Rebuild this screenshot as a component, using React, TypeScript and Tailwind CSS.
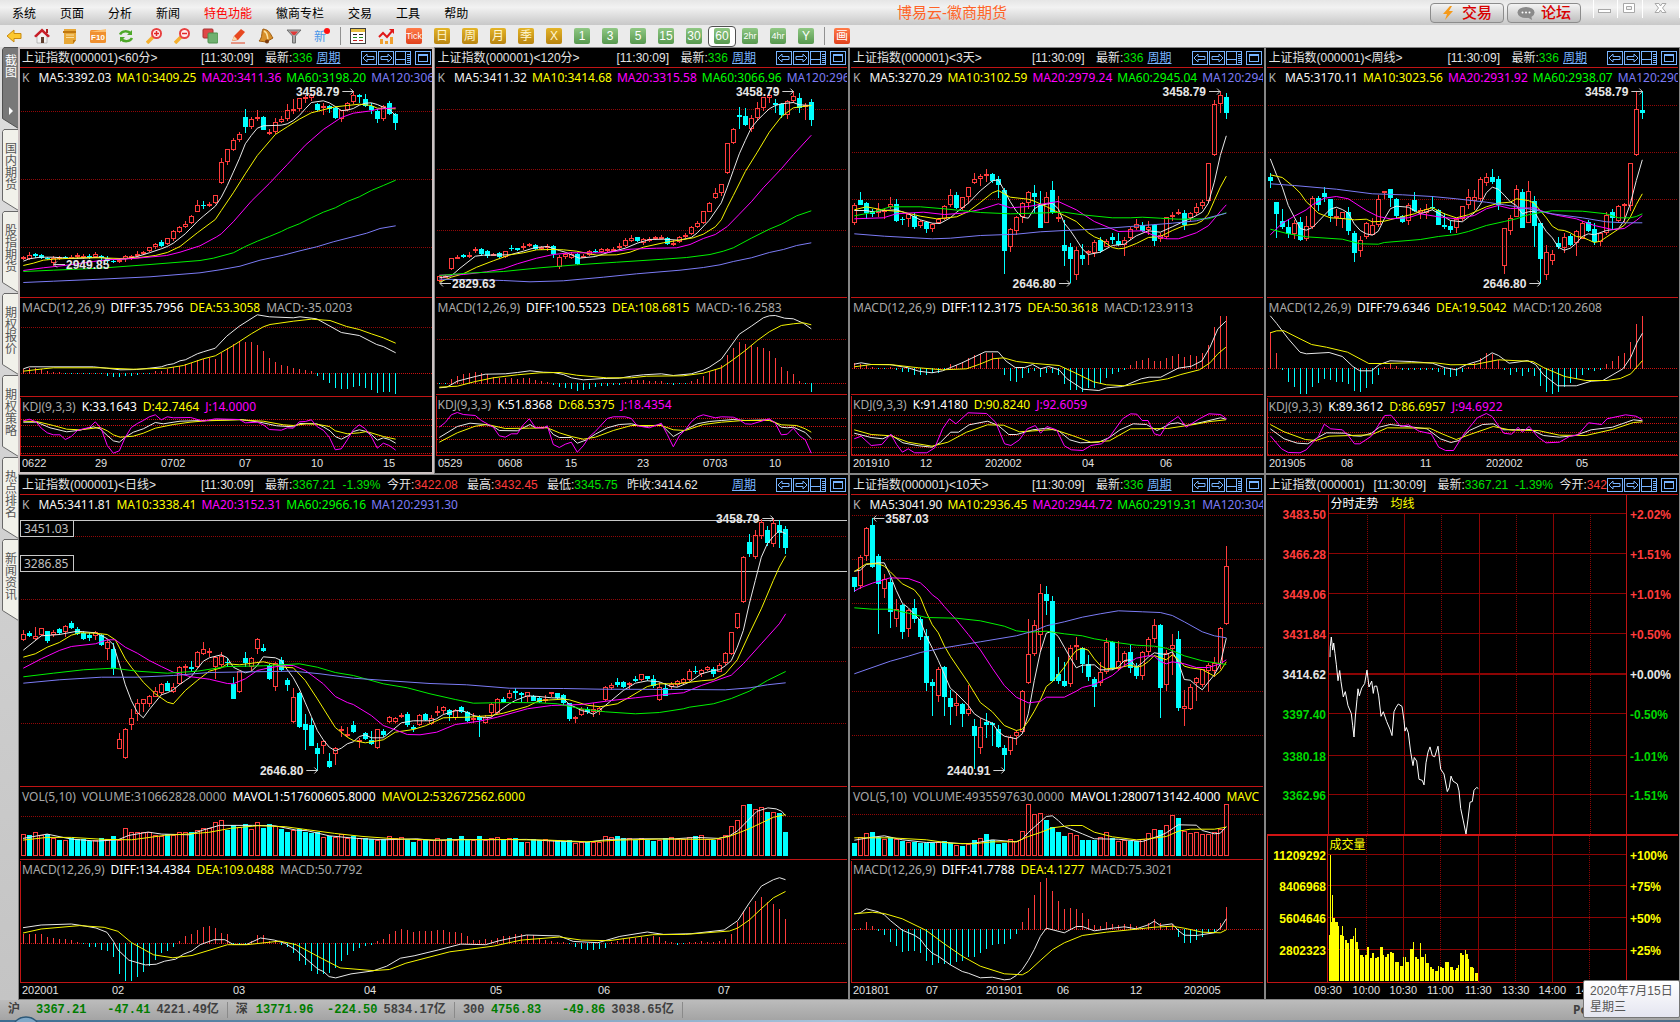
import type { ReactNode } from 'react'

const WHITE = '#e8e8e8'
const YELLOW = '#f5f500'
const MAGENTA = '#ff00ff'
const GREEN = '#00f000'
const BLUE = '#7b7bf5'
const UP = '#ff3c3c'
const DOWN = '#00ffff'
const LINE_COLORS = [WHITE, YELLOW, MAGENTA, GREEN, BLUE]

// Raw units -> pixels inside a pane
type Frame = { x: number; y: number; kx: number; ky: number }
type Series = { color: string; text: string }
type Marker = { text: string; x: number; y: number; dir: 'left' | 'right' }
type PaneData = {
  height: number
  labels: Series[]
  frame: Frame
  grid?: number[]
  lines?: string[]
  candles?: string
  bars?: number[]
  zero?: number
  volumes?: number[]
  base?: number
  markers?: Marker[]
  levels?: { y: number; boxTop: number; text: string }[]
  edge?: boolean
  brightGrid?: boolean
}
type ChartData = {
  period: string
  panes: PaneData[]
  axis: [number, string][]
  axisHeight: number
  active?: boolean
  wide?: boolean
}

const toY = (f: Frame, v: number) => Math.round((v - f.y) / f.ky)

const toPoints = (f: Frame, raw: string) =>
  raw
    .split(' ')
    .map((pair) => {
      const [x, y] = pair.split(',').map(Number)
      return `${((x - f.x) / f.kx).toFixed(1)},${((y - f.y) / f.ky + 0.5).toFixed(1)}`
    })
    .join(' ')

// "u 300 310 330 340": direction, high, body top, body bottom, low
const parseCandles = (raw: string) =>
  raw.split(',').map((item) => {
    const [dir, ...rest] = item.trim().split(' ')
    const [high, top, bottom, low] = rest.map(Number)
    return { up: dir === 'u', high, top, bottom, low }
  })

function Candles({ raw, frame }: { raw: string; frame: Frame }) {
  return (
    <g shapeRendering="crispEdges">
      {parseCandles(raw).map((c, i) => {
        const x = 6 * i
        const high = toY(frame, c.high)
        const top = toY(frame, c.top)
        const bottom = Math.max(toY(frame, c.bottom), top + 1)
        const low = Math.max(toY(frame, c.low), bottom)
        if (c.up) {
          return (
            <g key={i} stroke={UP} fill="none">
              <path d={`M${x + 3.5} ${high}V${top}M${x + 3.5} ${bottom}V${low}`} />
              <rect x={x + 1.5} y={top + 0.5} width={4} height={Math.max(bottom - top - 1, 1)} />
            </g>
          )
        }
        return (
          <g key={i} fill={DOWN}>
            <rect x={x + 3} y={high} width={1} height={Math.max(low - high, 1)} />
            <rect x={x + 1} y={top} width={5} height={bottom - top} />
          </g>
        )
      })}
    </g>
  )
}

function MarkerLabel({ marker, frame }: { marker: Marker; frame: Frame }) {
  const x = (marker.x - frame.x) / frame.kx
  const y = toY(frame, marker.y)
  const right = marker.dir === 'right'
  return (
    <g>
      <text
        x={right ? x - 14 : x + 12}
        y={y + 5}
        textAnchor={right ? 'end' : 'start'}
        fill="#e6e6e6"
        className="text-xs font-bold"
      >
        {marker.text}
      </text>
      <path
        d={right ? `M${x - 11} ${y + 0.5}h11m-3 -3l3 3l-3 3` : `M${x + 11} ${y + 0.5}h-11m3 -3l-3 3l3 3`}
        stroke="#d0d0d0"
        fill="none"
      />
    </g>
  )
}

function Pane({ pane, candleSource }: { pane: PaneData; candleSource: string }) {
  const f = pane.frame
  const directions = parseCandles(candleSource).map((c) => c.up)
  return (
    <section className="grid overflow-hidden border-t border-[#c01414]">
      <svg className="col-start-1 row-start-1 w-full" style={{ height: pane.height }}>
        <g shapeRendering="crispEdges">
          {pane.grid?.map((v) => (
            <line
              key={v}
              x1="1"
              x2="100%"
              y1={toY(f, v) + 0.5}
              y2={toY(f, v) + 0.5}
              stroke={pane.brightGrid ? '#d01010' : '#900808'}
              strokeDasharray="1 1"
            />
          ))}
          {pane.edge && <line x1="0.5" x2="0.5" y1="1" y2="100%" stroke="#c01414" />}
          {pane.zero !== undefined && (
            <line x1="1" x2="100%" y1={toY(f, pane.zero) + 0.5} y2={toY(f, pane.zero) + 0.5} stroke="#c81010" strokeDasharray="1 1" />
          )}
          {pane.volumes?.map((v, i) => {
            const top = toY(f, v)
            const height = toY(f, pane.base ?? 0) - top
            return directions[i] ? (
              <rect key={i} x={6 * i + 1.5} y={top + 0.5} width={4} height={height - 1} stroke={UP} fill="none" />
            ) : (
              <rect key={i} x={6 * i + 1} y={top} width={5} height={height} fill={DOWN} />
            )
          })}
          {pane.bars?.map((v, i) => {
            const zero = toY(f, pane.zero ?? 0)
            const y = toY(f, v)
            return (
              <rect
                key={i}
                x={6 * i + 3}
                y={Math.min(y, zero)}
                width={1}
                height={Math.abs(y - zero) + 1}
                fill={y < zero ? UP : DOWN}
              />
            )
          })}
        </g>
        {pane.levels?.map((l) => (
          <g key={l.text}>
            <line x1="0" x2="100%" y1={toY(f, l.y) + 0.5} y2={toY(f, l.y) + 0.5} stroke="#c8c8c8" />
            <rect x="0.5" y={toY(f, l.boxTop) + 0.5} width="53" height="16" fill="#000" stroke="#c8c8c8" />
            <text x="4" y={toY(f, l.boxTop) + 13} fill="#c0c0c0" className="font-['Noto_Sans'] text-xs">
              {l.text}
            </text>
          </g>
        ))}
        {pane.candles && <Candles raw={pane.candles} frame={f} />}
        {pane.lines?.map((raw, i) => (
          <polyline key={i} points={toPoints(f, raw)} fill="none" stroke={LINE_COLORS[i]} />
        ))}
        {pane.markers?.map((m) => <MarkerLabel key={m.text} marker={m} frame={f} />)}
      </svg>
      <p
        className={`z-10 col-start-1 row-start-1 flex h-5 overflow-hidden pl-0.5 font-['Noto_Sans'] text-xs leading-5 whitespace-nowrap ${pane.candles ? 'gap-[5px]' : 'gap-1.5'}`}
      >
        {pane.labels.map((l) => (
          <span key={l.text} style={{ color: l.color }} className={l.text === 'K' ? 'mr-1' : ''}>
            {l.text}
          </span>
        ))}
      </p>
    </section>
  )
}

function HeaderButton({ label, children, className = '' }: { label: string; children: ReactNode; className?: string }) {
  return (
    <button aria-label={label} className={`h-3.5 w-4 border border-[#78b4ff] bg-black ${className}`}>
      <svg width="14" height="12" viewBox="0 0 14 12" fill="none" stroke="#78b4ff" shapeRendering="crispEdges">
        {children}
      </svg>
    </button>
  )
}

function HeaderButtons() {
  return (
    <div className="mr-px flex shrink-0 gap-px">
      <HeaderButton label="上一个">
        <path d="M1 6l4-4v2.500h7v3h-7v2.500z" shapeRendering="auto" />
      </HeaderButton>
      <HeaderButton label="下一个">
        <path d="M13 6l-4-4v2.500h-7v3h7v2.500z" shapeRendering="auto" />
      </HeaderButton>
      <HeaderButton label="分栏">
        <path d="M0 7.500h10M9.500 0v12" />
        <path d="M11 2.500h3M11 4.500h3M11 6.500h3M11 8.500h3M11 10.500h3" />
      </HeaderButton>
      <HeaderButton label="最大化" className="ml-[3px]">
        <path d="M2.500 2.500h9v7h-9zM2 3.500h10" />
      </HeaderButton>
    </div>
  )
}

function Stat({ name, value, color, className = 'w-20' }: { name: string; value: string; color: string; className?: string }) {
  return (
    <span className={`shrink-0 ${className}`}>
      {name}:<span style={{ color }}>{value}</span>
    </span>
  )
}

const FALL = '#00e000'

function PanelHeader({ period, size }: { period?: string; size: 'narrow' | 'wide' | 'tick' }) {
  return (
    <header className="flex h-[18px] items-center overflow-hidden pl-0.5 text-xs leading-[18px] whitespace-nowrap text-[#e4e4e4]">
      <div className="flex min-w-0 flex-1 overflow-hidden">
        <h2 className={size === 'tick' ? 'w-[105px] shrink-0' : 'w-[179px] shrink-0'}>
          上证指数(000001){period && `<${period}>`}
        </h2>
        <time className="w-16 shrink-0">[11:30:09]</time>
        {size === 'narrow' && <Stat name="最新" value="336" color={FALL} className="" />}
        {size !== 'narrow' && <Stat name="最新" value={'3367.21\u00a0 -1.39%'} color={FALL} className="w-[122px]" />}
        {size === 'tick' && <Stat name="今开" value="342" color={UP} className="" />}
        {size === 'wide' && (
          <>
            <Stat name="今开" value="3422.08" color={UP} />
            <Stat name="最高" value="3432.45" color={UP} />
            <Stat name="最低" value="3345.75" color={FALL} />
            <Stat name="昨收" value="3414.62" color="#e4e4e4" />
          </>
        )}
      </div>
      {period && (
        <a href="#period" className="mr-5 ml-0.5 text-[#78b4ff] underline">
          周期
        </a>
      )}
      <HeaderButtons />
    </header>
  )
}

const frameClass = (active?: boolean) =>
  active ? 'border-2 border-[#cdc3c3] bg-black' : 'border border-[#858585] bg-black p-px'

function ChartPanel({ chart }: { chart: ChartData }) {
  const candles = chart.panes[0].candles ?? ''
  return (
    <article className={`min-w-0 overflow-hidden ${chart.wide ? 'col-span-2' : ''} ${frameClass(chart.active)}`}>
      <PanelHeader period={chart.period} size={chart.wide ? 'wide' : 'narrow'} />
      {chart.panes.map((p, i) => (
        <Pane key={i} pane={p} candleSource={candles} />
      ))}
      <svg className="block w-full border-t border-[#c01414] text-[11px]" style={{ height: chart.axisHeight }}>
        {chart.axis.map(([x, text]) => (
          <text key={x} x={x} y="11" fill="#e0e0e0">
            {text}
          </text>
        ))}
      </svg>
    </article>
  )
}

const maLabels = (v: string[]): Series[] => [
  { color: '#b0b0b0', text: 'K' },
  { color: '#f4f4f4', text: `MA5:${v[0]}` },
  { color: '#ffff00', text: `MA10:${v[1]}` },
  { color: MAGENTA, text: `MA20:${v[2]}` },
  { color: '#00ff00', text: `MA60:${v[3]}` },
  { color: BLUE, text: `MA120:${v[4]}` },
]
const macdLabels = (diff: string, dea: string, macd: string): Series[] => [
  { color: '#a8a8a8', text: 'MACD(12,26,9)' },
  { color: '#ffffff', text: `DIFF:${diff}` },
  { color: '#ffff00', text: `DEA:${dea}` },
  { color: '#a8a8a8', text: `MACD:${macd}` },
]
const kdjLabels = (k: string, d: string, j: string): Series[] => [
  { color: '#a8a8a8', text: 'KDJ(9,3,3)' },
  { color: '#ffffff', text: `K:${k}` },
  { color: '#ffff00', text: `D:${d}` },
  { color: MAGENTA, text: `J:${j}` },
]
const volLabels = (v: string, m1: string, last: string): Series[] => [
  { color: '#a8a8a8', text: 'VOL(5,10)' },
  { color: '#a8a8a8', text: `VOLUME:${v}` },
  { color: '#ffffff', text: `MAVOL1:${m1}` },
  { color: '#ffff00', text: last },
]

const min60: ChartData = {
  period: '60分',
  active: true,
  axisHeight: 17,
  axis: [[2, '0622'], [75, '29'], [141, '0702'], [219, '07'], [291, '10'], [363, '15']],
  panes: [
    {
      height: 229,
      labels: maLabels(['3392.03', '3409.25', '3411.36', '3198.20', '306']),
      frame: { x: 60, y: 204, kx: 3, ky: 3 },
      grid: [334, 538, 742],
      candles:
        'u 768 771 778 780,u 757 764 776 780,d 760 763 769 773,d 763 765 774 778,d 771 774 776 779,u 768 775 790 798,u 768 770 776 780,d 768 771 774 778,u 766 772 774 776,u 760 765 772 776,u 762 767 773 776,d 762 768 774 777,u 756 762 770 774,d 764 767 775 780,d 768 775 784 790,d 778 782 786 788,u 778 781 786 790,u 765 767 778 786,u 764 767 774 780,u 752 762 766 770,u 754 756 762 766,u 740 742 752 756,u 730 731 742 747,d 719 726 737 741,u 714 715 733 736,u 690 694 718 722,u 678 680 696 700,u 664 671 680 684,u 645 649 668 671,u 600 616 635 637,d 604 615 618 628,u 605 611 616 622,u 585 586 608 612,u 473 487 550 552,u 446 448 487 494,u 414 421 449 452,u 396 403 421 425,d 327 351 380 398,u 350 357 380 388,u 330 351 356 362,d 347 351 389 390,u 388 397 400 406,u 355 365 397 402,u 348 358 365 370,u 312 331 358 362,u 298 326 331 342,u 293 295 326 334,u 285 292 294 308,u 278 284 294 302,d 308 311 330 333,u 310 318 321 345,d 314 319 328 340,d 320 325 354 358,u 330 331 357 365,u 307 308 330 333,u 274 286 307 312,d 282 286 290 310,d 282 297 318 320,d 310 318 331 343,d 326 332 357 368,u 316 319 356 362,d 302 310 342 345,d 338 341 368 390',
      lines: [
        '70,782 88,775 120,770 160,770 214,774 250,773 300,770 340,777 380,775 412,768 448,757 484,745 502,738 520,728 556,700 592,663 610,647 646,617 664,590 682,555 700,515 718,475 736,430 754,405 772,383 790,376 844,374 862,370 880,360 898,345 916,325 934,306 970,301 988,307 1006,318 1024,330 1042,329 1060,324 1078,314 1096,308 1114,307 1132,312 1150,320 1168,327 1187,345',
        '70,795 100,788 130,779 160,776 240,772 300,772 360,774 412,772 466,765 502,756 540,738 592,697 646,657 664,630 700,577 736,520 772,465 826,402 862,379 898,356 934,337 970,328 1006,319 1042,315 1078,311 1114,315 1132,323 1187,325',
        '70,810 130,802 200,794 280,783 320,778 400,774 500,765 540,755 600,736 650,709 664,700 700,664 754,602 808,549 862,492 916,434 970,387 1024,351 1060,338 1114,331 1132,326 1187,322',
        '70,813 160,809 300,803 450,792 600,780 640,773 700,757 736,738 772,722 808,708 844,693 862,684 898,670 934,652 970,635 1006,622 1042,603 1078,589 1114,570 1150,555 1187,539',
        '70,846 160,842 300,836 450,829 600,817 660,808 720,797 780,779 850,764 900,751 950,739 1000,724 1050,711 1100,698 1140,684 1187,676',
      ],
      markers: [
        { text: '3458.79', x: 1060, y: 274, dir: 'right' },
        { text: '2949.85', x: 162, y: 792, dir: 'left' },
      ],
    },
    {
      height: 98,
      labels: macdLabels('35.7956', '53.3058', '-35.0203'),
      frame: { x: 60, y: 129, kx: 3, ky: 3 },
      grid: [217],
      zero: 355,
      bars: [342, 340, 340, 343, 348, 352, 351, 354, 354, 354, 354, 354, 354, 353, 359, 362, 362, 360, 359, 357, 354, 353, 348, 348, 342, 335, 333, 328, 324, 316, 312, 310, 312, 294, 280, 268, 262, 262, 262, 270, 288, 310, 322, 330, 334, 340, 342, 346, 348, 359, 372, 380, 396, 398, 398, 393, 390, 395, 402, 410, 408, 407, 413],
      lines: [
        '70,340 88,334 280,334 320,338 360,343 410,342 448,338 484,334 502,328 520,325 540,316 556,313 574,304 592,295 610,289 646,278 680,242 718,212 772,178 808,184 880,187 900,184 950,190 990,212 1024,231 1078,240 1130,267 1150,273 1187,292',
        '70,347 130,340 160,337 300,337 400,341 500,338 550,330 580,320 610,310 646,301 700,270 754,235 790,214 810,207 880,197 934,191 990,195 1040,213 1078,222 1114,235 1150,247 1187,263',
      ],
    },
    {
      height: 58,
      edge: true,
      brightGrid: true,
      labels: kdjLabels('33.1643', '42.7464', '14.0000'),
      frame: { x: 60, y: 426, kx: 3, ky: 3 },
      grid: [491, 511, 544, 574, 595],
      lines: [
        '70,500 110,500 150,517 200,529 240,524 280,514 300,520 322,540 340,556 358,560 376,545 400,530 430,520 466,501 490,505 540,497 610,495 720,492 780,500 830,511 880,514 900,504 950,505 970,514 990,526 1006,543 1024,551 1042,542 1060,528 1078,523 1096,527 1114,537 1132,554 1150,547 1168,552 1187,563',
        '70,497 110,498 160,510 200,521 240,523 300,516 322,526 340,538 360,545 400,542 430,533 466,518 520,507 570,500 620,496 720,493 790,497 850,508 880,510 920,505 950,506 988,513 1006,526 1042,535 1078,532 1100,528 1150,543 1187,551',
        '70,496 88,491 108,499 124,518 142,532 160,538 180,538 196,552 214,543 232,525 250,520 268,516 286,499 304,520 322,570 340,593 358,586 376,545 394,516 412,504 430,495 448,484 466,478 484,493 502,484 520,487 572,486 610,497 646,490 718,492 736,502 772,500 790,508 808,522 844,524 862,517 880,518 898,499 916,498 934,493 952,514 970,524 988,545 1006,583 1024,580 1042,553 1060,523 1078,508 1096,520 1114,543 1132,578 1150,563 1168,570 1187,584',
      ],
    },
  ],
}

const min120: ChartData = {
  period: '120分',
  axisHeight: 17,
  axis: [[2, '0529'], [62, '0608'], [129, '15'], [201, '23'], [267, '0703'], [333, '10']],
  panes: [
    {
      height: 229,
      labels: maLabels(['3411.32', '3414.68', '3315.58', '3066.96', '296']),
      frame: { x: 18, y: 204, kx: 3, ky: 3 },
      grid: [328, 508, 690],
      candles:
        'u 826 828 843 845,u 824 828 830 834,u 773 775 808 810,u 765 770 775 778,d 762 766 772 774,u 757 765 772 775,u 742 747 753 760,d 744 748 762 764,d 750 753 767 774,u 758 762 766 769,d 757 760 771 773,u 752 754 772 774,d 735 744 747 752,d 743 745 749 752,u 730 738 744 750,u 729 731 735 741,d 733 736 746 749,u 737 740 745 750,u 732 738 742 752,d 734 737 763 774,u 765 771 802 808,u 758 763 770 776,u 755 762 774 776,d 760 763 792 794,u 762 768 771 774,u 750 754 766 768,d 748 752 756 760,u 745 748 757 760,u 744 748 754 758,u 742 746 749 752,u 730 737 745 748,u 715 721 737 740,u 706 713 722 726,d 710 712 722 725,u 715 717 728 735,u 712 716 720 725,u 707 711 716 720,u 704 710 715 718,d 710 714 731 735,u 720 728 731 738,u 708 710 725 728,u 700 706 711 715,u 678 680 702 704,u 664 668 680 684,u 632 634 670 672,u 606 610 635 637,u 563 580 595 597,u 551 553 580 588,u 429 430 520 522,u 384 388 430 432,d 321 345 350 386,d 324 348 376 378,u 345 355 386 396,u 306 325 355 362,u 290 292 325 332,u 278 286 294 310,d 297 308 316 340,d 310 312 345 354,u 300 304 346 356,u 274 289 303 310,d 279 294 323 338,u 308 316 322 360,d 297 306 359 378',
      lines: [
        '28,832 64,826 90,803 136,767 160,764 240,763 280,752 316,741 352,738 388,750 406,755 424,763 448,773 496,768 532,757 586,743 622,728 658,717 700,716 748,719 784,711 802,697 838,659 874,607 892,560 910,510 928,460 946,420 964,382 982,360 1000,342 1018,325 1036,315 1054,310 1090,306 1108,313 1144,315',
        '28,845 64,830 100,820 140,800 190,781 240,763 280,757 320,748 360,747 400,748 440,752 500,764 560,763 600,755 640,740 700,727 760,717 790,712 820,701 856,679 874,658 892,620 910,585 946,513 982,455 1018,395 1054,349 1090,322 1144,315',
        '28,824 100,822 170,814 220,805 262,790 320,773 370,762 420,757 520,757 560,752 600,746 680,743 740,742 780,732 820,714 856,702 892,678 928,641 964,604 1000,562 1054,505 1090,463 1144,404',
        '28,825 110,818 220,813 330,802 440,793 560,785 700,776 770,771 840,762 880,752 910,742 964,713 1018,686 1054,671 1100,646 1144,631',
        '28,836 150,838 220,840 300,844 400,841 520,830 620,820 750,809 820,801 870,793 910,783 964,772 1018,756 1060,747 1100,735 1144,727',
      ],
      markers: [
        { text: '3458.79', x: 1090, y: 274, dir: 'right' },
        { text: '2829.63', x: 30, y: 848, dir: 'left' },
      ],
    },
    {
      height: 96,
      labels: macdLabels('100.5523', '108.6815', '-16.2583'),
      frame: { x: 18, y: 24, kx: 3, ky: 3 },
      grid: [148],
      zero: 280,
      bars: [280, 280, 266, 258, 252, 249, 246, 249, 252, 262, 264, 264, 265, 267, 265, 264, 270, 274, 276, 281, 287, 290, 294, 300, 296, 293, 289, 285, 284, 281, 281, 276, 271, 270, 270, 273, 273, 273, 279, 281, 279, 279, 274, 266, 258, 246, 238, 225, 195, 175, 156, 162, 164, 171, 175, 183, 205, 232, 243, 252, 272, 280, 302],
      lines: [
        '28,292 50,290 82,272 136,258 166,251 226,250 262,246 300,241 340,245 370,246 400,252 424,262 460,268 520,264 568,263 604,257 640,253 694,250 730,255 784,250 820,239 838,230 874,206 928,131 964,107 1000,82 1018,76 1036,75 1064,83 1090,85 1120,98 1144,115',
        '28,290 82,287 136,273 190,262 262,253 330,247 390,246 440,254 530,262 604,262 650,257 760,256 820,248 874,232 910,207 946,180 982,150 1018,124 1054,105 1090,100 1120,97 1144,103',
      ],
    },
    {
      height: 60,
      edge: true,
      brightGrid: true,
      labels: kdjLabels('51.8368', '68.5375', '18.4354'),
      frame: { x: 18, y: 315, kx: 3, ky: 3 },
      grid: [385, 409, 448, 487],
      lines: [
        '28,441 82,408 120,398 166,402 190,408 208,420 262,421 300,402 316,412 352,410 370,432 388,441 424,441 442,458 470,448 496,431 532,412 568,402 604,400 640,408 694,403 730,438 766,418 802,400 838,393 874,390 910,387 946,390 1018,388 1036,396 1054,410 1072,412 1090,410 1126,426 1144,445',
        '28,455 82,427 136,407 172,402 226,414 298,413 352,412 388,427 424,438 460,446 496,440 550,420 604,405 694,405 730,418 766,420 820,402 874,395 940,390 1018,390 1054,403 1100,405 1126,415 1144,425',
        '28,410 46,396 64,373 82,366 100,372 136,375 154,390 190,410 208,436 226,440 244,430 262,430 280,403 298,385 316,411 340,413 352,406 370,462 388,471 406,461 424,455 442,485 460,466 478,439 496,423 532,384 550,379 586,379 604,384 622,406 658,412 680,404 694,398 712,432 730,469 748,436 766,418 784,394 802,379 820,373 856,382 874,379 910,380 928,388 946,400 964,401 1018,385 1036,398 1054,433 1072,431 1090,413 1108,435 1126,448 1144,488',
      ],
    },
  ],
}

const day3: ChartData = {
  period: '3天',
  axisHeight: 17,
  axis: [[2, '201910'], [69, '12'], [134, '202002'], [231, '04'], [309, '06']],
  panes: [
    {
      height: 229,
      labels: maLabels(['3270.29', '3102.59', '2979.24', '2945.04', '294']),
      frame: { x: 3, y: 204, kx: 3, ky: 3 },
      grid: [316, 457, 598, 739],
      candles:
        'u 608 615 668 674,d 576 600 614 616,d 606 609 640 656,d 626 632 642 651,u 608 628 640 650,u 624 630 634 656,u 591 612 620 626,d 597 612 662 666,d 650 657 660 675,u 640 643 658 682,d 640 648 681 686,u 660 664 679 684,d 662 666 687 698,u 668 671 688 697,u 655 656 668 671,u 616 619 656 660,u 568 586 616 622,d 576 585 624 628,u 590 592 624 630,u 560 562 592 612,u 518 538 550 552,u 521 528 537 558,u 507 523 527 545,d 519 522 544 550,d 527 538 556 594,d 564 570 752 822,u 684 686 742 756,u 648 650 694 704,u 606 608 650 668,u 573 577 610 628,d 555 578 590 638,d 574 612 683 684,u 576 590 668 670,d 543 570 636 642,u 588 652 656 666,d 660 735 752 798,d 728 740 776 848,u 742 751 824 840,d 732 766 776 795,u 750 752 758 794,u 720 727 758 770,d 712 720 752 758,u 718 724 740 742,d 700 711 719 732,d 700 724 735 738,u 712 720 735 767,u 682 688 715 720,u 657 673 684 690,d 666 675 692 696,u 664 680 690 706,d 672 674 724 738,u 700 704 718 726,u 650 652 712 718,u 636 645 648 664,u 627 636 639 646,d 630 639 676 689,u 636 640 654 664,u 610 620 640 646,u 600 607 618 628,u 489 490 604 610,u 300 313 466 468,u 274 286 313 338,d 279 291 338 356',
      lines: [
        '13,630 49,630 67,634 103,630 139,628 175,640 211,658 247,668 270,669 301,652 319,636 355,608 391,571 427,541 445,538 463,570 481,604 499,632 517,650 535,653 553,625 571,614 607,608 625,625 643,668 661,690 679,717 697,745 715,762 751,755 787,735 823,731 859,706 895,691 931,695 967,679 1003,662 1030,650 1057,635 1075,608 1093,545 1111,465 1129,406',
        '13,628 49,619 103,629 157,634 211,647 260,655 320,649 355,633 391,606 427,577 445,570 481,590 535,596 553,602 589,618 607,627 643,645 679,663 715,697 733,709 751,716 787,741 805,745 823,743 859,729 895,711 931,708 967,690 1003,675 1039,670 1057,661 1075,641 1093,600 1111,560 1129,527',
        '13,655 100,652 139,640 220,635 283,642 337,638 391,627 445,610 481,622 535,618 580,610 625,603 679,628 733,663 805,693 877,691 913,705 949,715 985,715 1039,697 1075,676 1093,655 1111,633 1129,613',
        '13,646 67,636 121,619 211,619 283,625 391,636 481,640 553,638 643,635 697,643 787,652 841,652 877,650 931,653 985,656 1075,655 1129,637',
        '13,700 103,707 247,715 301,713 391,705 499,701 571,694 643,690 733,686 841,678 967,668 1039,661 1129,638',
      ],
      markers: [
        { text: '3458.79', x: 1110, y: 274, dir: 'right' },
        { text: '2646.80', x: 660, y: 848, dir: 'right' },
      ],
    },
    {
      height: 96,
      labels: macdLabels('112.3175', '50.3618', '123.9113'),
      frame: { x: 1.9, y: 24, kx: 1.889, ky: 3 },
      zero: 235,
      bars: [220, 222, 226, 231, 234, 235, 231, 237, 243, 243, 251, 251, 253, 246, 247, 236, 222, 225, 215, 205, 195, 192, 188, 190, 205, 252, 269, 273, 262, 246, 240, 257, 246, 246, 253, 279, 297, 298, 303, 291, 290, 278, 262, 248, 243, 236, 225, 213, 210, 204, 213, 214, 203, 197, 192, 202, 196, 197, 190, 165, 110, 78, 78],
      lines: [
        '8,221 21,217 40,222 75,222 110,232 130,242 155,247 175,241 190,231 210,218 230,203 255,184 280,184 295,212 312,231 330,231 345,222 360,235 375,228 395,238 410,265 440,296 470,300 485,292 515,288 550,265 565,260 587,260 620,233 645,227 665,211 680,170 695,115 710,92',
        '8,229 40,222 80,223 130,232 175,238 220,235 245,221 270,205 290,202 315,213 350,219 395,225 425,247 460,274 485,283 520,286 550,278 600,265 625,252 660,238 680,217 695,190 710,170',
      ],
    },
    {
      height: 60,
      edge: true,
      brightGrid: true,
      labels: kdjLabels('91.4180', '90.8240', '92.6059'),
      frame: { x: 1.9, y: 315, kx: 1.889, ky: 3 },
      grid: [376, 400, 436, 472, 493],
      lines: [
        '8,428 40,441 62,445 77,433 100,457 130,466 155,470 170,457 190,425 205,425 225,403 260,392 280,405 300,432 315,432 345,418 372,413 395,422 415,448 435,457 470,455 490,441 510,418 535,400 560,402 580,420 605,400 620,397 635,405 665,395 700,382 710,386',
        '8,418 40,432 77,436 110,455 155,467 185,455 220,425 260,403 290,404 320,424 385,417 420,435 455,455 490,451 530,415 600,414 650,402 680,393 710,388',
        '8,445 21,437 40,465 60,462 77,431 88,462 99,485 110,475 122,487 145,487 160,472 175,415 188,385 200,400 223,367 258,369 275,395 292,460 304,465 320,448 335,415 350,405 360,428 372,408 390,418 405,466 418,478 440,480 455,465 475,460 490,440 515,385 530,370 542,371 552,390 563,390 575,430 586,435 600,400 620,378 635,410 660,385 678,370 700,372 712,386',
      ],
    },
  ],
}

const week: ChartData = {
  period: '周线',
  axisHeight: 17,
  axis: [[2, '201905'], [74, '08'], [153, '11'], [219, '202002'], [309, '05']],
  panes: [
    {
      height: 229,
      labels: maLabels(['3170.11', '3023.56', '2931.92', '2938.07', '290']),
      frame: { x: 21, y: 204, kx: 3, ky: 3 },
      grid: [316, 457, 598, 739],
      candles:
        'd 520 531 543 564,d 606 606 642 714,d 628 663 680 686,d 656 682 701 713,u 660 668 703 716,d 650 667 720 723,u 648 679 716 722,u 588 595 682 686,d 588 594 614 634,d 562 579 592 606,d 597 598 648 666,u 628 648 654 678,u 635 636 656 684,d 622 636 692 705,d 694 699 759 786,u 708 721 752 770,u 665 670 712 718,u 654 676 704 706,u 586 598 676 682,u 573 574 580 596,d 568 568 594 622,d 593 597 648 656,d 644 648 665 668,u 610 616 664 675,d 576 600 632 636,u 624 630 640 656,u 612 628 638 656,d 589 621 625 630,d 628 631 675 676,d 640 674 682 686,d 664 678 690 700,u 654 657 685 698,u 617 619 656 662,u 567 592 616 628,u 570 592 602 630,u 530 538 598 602,u 519 532 548 558,d 507 531 545 552,d 528 538 614 630,u 683 685 797 822,u 644 655 694 704,u 556 568 650 652,d 566 576 683 684,u 543 574 668 670,d 588 604 677 740,d 668 670 776 848,u 734 757 824 840,u 750 763 782 796,d 712 730 740 748,u 700 712 744 758,d 702 708 735 738,u 690 694 730 768,u 662 670 716 716,d 659 666 692 696,d 670 686 726 735,u 698 700 727 738,u 636 646 700 704,d 626 636 654 690,u 616 619 662 668,u 608 611 618 668,u 489 490 618 632,u 275 328 466 468,d 274 330 338 356',
      lines: [
        '31,475 49,521 67,560 85,615 103,650 121,684 139,689 157,681 175,663 193,644 211,626 229,620 247,627 265,638 283,670 301,690 319,700 337,704 355,692 373,655 391,625 409,617 445,620 481,640 517,628 535,638 571,660 607,664 643,637 661,612 679,577 697,560 715,566 733,584 751,604 769,615 787,640 805,634 823,632 841,665 859,693 877,712 895,740 913,749 931,743 949,728 967,708 985,700 1003,703 1039,690 1075,685 1093,660 1111,610 1129,540 1147,478',
        '31,523 67,531 103,560 121,578 139,604 157,620 175,638 211,652 247,654 283,658 319,656 337,664 373,662 409,653 463,640 481,632 517,622 553,640 589,652 625,643 679,619 715,608 751,605 769,595 805,600 823,608 841,630 859,652 877,677 895,688 913,690 931,697 949,708 967,710 985,718 1003,726 1021,722 1039,710 1093,674 1111,650 1129,612 1147,580',
        '31,703 67,668 103,647 139,628 157,613 193,593 229,588 265,595 319,630 355,648 391,655 445,652 481,640 535,649 589,655 643,645 679,625 715,615 751,624 823,622 859,637 895,645 949,655 1003,675 1057,687 1093,684 1111,672 1129,660 1147,645',
        '31,686 85,700 139,709 247,716 301,730 355,731 373,726 481,717 535,708 589,702 625,693 679,675 733,663 769,655 805,643 841,636 877,631 967,632 1039,640 1075,652 1111,652 1129,648 1147,640',
        '31,550 103,555 229,566 337,580 427,583 517,588 589,595 679,605 733,613 823,628 877,640 967,652 1039,664 1093,667 1147,667',
      ],
      markers: [
        { text: '3458.79', x: 1147, y: 274, dir: 'right' },
        { text: '2646.80', x: 841, y: 848, dir: 'right' },
      ],
    },
    {
      height: 98,
      labels: macdLabels('79.6346', '19.5042', '120.2608'),
      frame: { x: 787.7, y: 24, kx: 1.889, ky: 3 },
      zero: 235,
      bars: [125, 189, 237, 272, 288, 308, 308, 288, 276, 264, 266, 272, 273, 278, 299, 303, 290, 278, 252, 232, 223, 229, 236, 237, 237, 237, 236, 236, 242, 252, 258, 254, 242, 231, 219, 203, 189, 193, 209, 237, 251, 243, 254, 242, 254, 285, 303, 308, 302, 288, 276, 264, 252, 237, 239, 237, 222, 213, 199, 188, 156, 101, 78],
      lines: [
        '794,76 806,99 828,145 850,185 862,190 905,186 930,198 950,228 963,241 985,241 1000,222 1020,211 1060,213 1100,218 1125,232 1145,238 1165,222 1190,210 1213,187 1225,195 1245,218 1260,215 1280,210 1295,222 1310,253 1337,286 1372,286 1400,272 1422,270 1460,235 1475,200 1487,155 1497,128',
        '794,127 806,121 820,121 850,145 872,162 900,170 940,185 980,219 1010,219 1060,217 1105,217 1135,223 1180,222 1225,208 1290,213 1310,231 1350,258 1390,270 1430,270 1455,264 1475,250 1485,232 1497,210',
      ],
    },
    {
      height: 58,
      edge: true,
      brightGrid: true,
      labels: kdjLabels('89.3612', '86.6957', '94.6922'),
      frame: { x: 787.7, y: 321, kx: 1.889, ky: 3 },
      grid: [382, 400, 427, 454, 492],
      lines: [
        '794,415 820,445 845,458 865,460 885,440 900,427 935,428 950,436 965,437 985,428 1000,410 1020,402 1090,415 1115,445 1135,456 1150,450 1170,420 1195,402 1215,400 1235,418 1285,417 1310,435 1340,440 1370,435 1400,418 1440,410 1480,388 1497,391',
        '794,402 820,424 860,447 880,450 905,437 985,433 1015,412 1095,413 1120,431 1145,447 1175,430 1215,408 1250,419 1300,420 1340,434 1390,435 1440,417 1480,396 1497,394',
        '794,436 815,475 828,486 850,487 862,478 885,437 896,401 908,415 930,418 942,437 953,460 963,460 985,437 1010,375 1022,374 1040,408 1055,403 1075,422 1098,430 1112,470 1125,480 1140,480 1160,430 1185,382 1202,369 1213,378 1235,428 1250,431 1262,410 1270,425 1283,408 1300,440 1315,457 1340,455 1360,437 1375,433 1395,397 1420,402 1430,385 1465,373 1485,377 1497,388',
      ],
    },
  ],
}

const daily: ChartData = {
  period: '日线',
  wide: true,
  axisHeight: 16,
  axis: [[2, '202001'], [92, '02'], [213, '03'], [344, '04'], [470, '05'], [578, '06'], [698, '07']],
  panes: [
    {
      height: 291,
      labels: maLabels(['3411.81', '3338.41', '3152.31', '2966.16', '2931.30']),
      frame: { x: 60, y: -15, kx: 3, ky: 3 },
      grid: [109, 296, 484, 670],
      levels: [
        { y: 61, boxTop: 61, text: '3451.03' },
        { y: 213, boxTop: 166, text: '3286.85' },
      ],
      candles:
        'u 390 403 421 423,d 394 400 407 412,u 382 407 417 419,u 384 385 405 407,d 392 394 422 428,u 390 395 405 410,d 384 388 400 406,u 375 377 395 412,d 363 369 383 386,d 381 388 402 406,d 392 400 416 419,d 400 405 413 422,u 394 395 408 419,d 402 406 434 437,u 418 427 448 480,d 430 447 506 524,u 700 718 748 748,u 683 686 775 776,u 628 653 676 689,u 597 608 643 662,u 596 598 611 635,u 584 587 613 620,u 562 574 590 592,u 550 551 580 584,d 544 549 572 574,u 550 560 577 578,u 498 500 553 555,u 491 497 500 522,d 484 502 506 515,u 453 455 502 505,u 427 446 463 465,u 444 454 458 470,u 468 472 500 536,u 456 468 494 502,d 474 486 489 500,d 531 551 596 597,u 512 514 577 578,d 457 474 489 502,u 471 473 500 512,u 414 416 448 461,d 432 444 452 455,d 493 496 537 540,u 486 488 560 572,d 471 480 510 512,d 534 541 555 573,u 564 590 665 670,d 576 580 680 684,d 642 673 689 749,d 655 676 737 738,d 728 744 761 812,u 720 722 737 762,d 759 783 800 804,u 740 743 761 795,u 678 686 692 711,u 680 702 706 712,d 662 676 696 698,u 715 719 725 743,d 696 700 717 720,d 692 720 732 735,u 686 688 745 746,d 688 694 705 712,u 648 650 665 668,u 650 655 665 670,u 640 645 648 655,d 636 642 674 682,d 676 682 686 695,u 642 644 675 678,d 638 642 660 662,u 645 653 672 675,u 618 633 637 648,u 618 620 632 642,d 628 631 645 662,u 626 630 655 660,d 618 622 636 640,d 634 637 662 666,u 640 654 658 668,d 645 650 660 710,u 645 652 668 672,u 608 613 640 652,u 594 596 638 642,d 590 596 606 608,u 570 580 594 598,d 563 574 580 596,d 576 578 584 606,u 576 577 592 606,d 586 587 602 604,d 588 593 606 610,u 584 596 600 608,u 576 577 580 592,d 578 580 594 596,d 582 585 608 614,d 608 610 657 663,u 648 652 656 668,u 620 626 644 648,d 620 626 636 642,u 610 626 636 650,u 620 624 637 644,u 558 562 601 604,u 550 556 563 570,d 534 546 554 560,d 542 546 561 565,u 546 548 555 568,d 528 537 542 546,u 522 523 539 544,d 528 529 537 542,d 525 537 558 564,u 546 560 599 602,d 550 565 587 588,u 546 551 560 568,u 540 544 555 560,u 534 538 550 556,u 508 514 541 544,d 498 512 515 522,u 508 511 521 530,u 498 502 509 514,d 502 508 522 532,u 488 496 515 516,u 456 460 490 494,u 396 397 461 464,u 338 340 385 387,u 168 172 307 308,d 102 126 161 171,u 90 106 170 178,u 56 65 107 116,d 78 90 129 138,u 55 70 131 141,d 61 75 99 144,d 78 87 144 162',
      lines: [
        '70,449 124,406 178,402 232,392 286,397 304,405 322,415 340,432 358,490 376,553 394,600 412,635 430,652 448,627 484,583 502,577 520,568 538,553 556,540 574,528 592,505 610,482 628,472 664,463 682,472 700,500 718,509 736,517 754,512 772,495 790,469 826,472 844,480 862,508 880,532 898,565 916,607 934,648 952,690 970,718 988,740 1006,751 1024,743 1042,730 1060,724 1078,708 1096,703 1114,712 1150,712 1204,667 1240,661 1290,661 1310,655 1330,642 1366,631 1384,630 1402,636 1420,645 1456,652 1474,650 1492,636 1528,610 1546,600 1582,586 1618,588 1654,592 1690,593 1708,612 1726,620 1744,630 1762,634 1780,641 1798,630 1834,600 1870,570 1906,548 1942,541 1978,544 2014,558 2032,560 2068,545 2104,520 2140,510 2158,508 2176,496 2194,480 2212,440 2230,390 2248,310 2266,240 2284,170 2302,130 2320,108 2338,90 2357,100',
        '70,470 106,460 142,440 178,426 214,404 240,397 286,398 322,402 346,418 376,475 394,500 430,545 466,580 502,605 520,610 556,570 592,540 628,512 664,502 682,490 718,493 790,484 826,492 850,500 880,502 916,540 952,595 1006,681 1042,710 1060,720 1096,727 1150,718 1186,695 1240,687 1276,676 1330,652 1402,650 1474,645 1510,638 1582,618 1618,600 1690,596 1708,598 1762,614 1800,619 1852,610 1888,590 1942,558 1978,550 2032,550 2104,541 2140,538 2176,520 2212,478 2248,400 2284,325 2320,240 2338,200 2357,166',
        '70,503 124,475 178,450 214,438 286,430 322,418 346,418 376,440 412,458 448,480 484,498 520,515 574,529 628,536 682,549 700,550 736,535 772,510 808,502 844,496 880,495 916,510 970,550 1006,588 1042,606 1060,612 1114,645 1150,675 1186,688 1222,702 1260,703 1310,695 1366,672 1438,662 1492,650 1582,625 1654,615 1744,612 1834,600 1906,592 2014,580 2050,577 2104,555 2194,524 2230,490 2284,430 2338,370 2357,340',
        '70,529 160,518 250,508 340,503 412,512 502,518 592,512 682,498 790,496 898,490 952,500 1006,516 1060,525 1150,550 1222,562 1290,580 1366,597 1420,608 1528,606 1618,607 1672,610 1744,625 1816,634 1906,640 1978,636 2050,625 2068,620 2140,610 2194,594 2248,572 2302,540 2357,513',
        '70,548 178,538 304,530 412,530 520,525 628,516 754,514 880,512 960,520 1060,533 1200,543 1290,549 1400,553 1528,563 1690,564 1800,566 2050,567 2176,568 2250,562 2302,553 2357,547',
      ],
      markers: [
        { text: '3458.79', x: 2320, y: 55, dir: 'right' },
        { text: '2646.80', x: 952, y: 811, dir: 'right' },
      ],
    },
    {
      height: 72,
      labels: volLabels('310662828.0000', '517600605.8000', 'MAVOL2:532672562.6000'),
      frame: { x: 36.5, y: 51, kx: 1.823, ky: 2.984 },
      grid: [139],
      base: 258,
      volumes: [190, 195, 184, 193, 190, 204, 210, 210, 204, 206, 206, 211, 208, 204, 206, 196, 208, 172, 186, 184, 186, 184, 195, 198, 190, 195, 184, 184, 184, 178, 172, 172, 154, 149, 178, 164, 170, 160, 175, 154, 172, 160, 166, 175, 186, 180, 175, 185, 188, 184, 200, 198, 200, 192, 204, 198, 202, 204, 206, 208, 206, 196, 202, 200, 206, 216, 210, 208, 208, 202, 208, 204, 210, 198, 208, 208, 198, 208, 202, 199, 206, 204, 204, 214, 216, 206, 208, 205, 210, 210, 212, 208, 219, 216, 214, 216, 214, 198, 200, 198, 204, 204, 208, 202, 210, 212, 208, 202, 201, 206, 206, 199, 196, 195, 206, 208, 206, 193, 166, 150, 105, 102, 118, 112, 126, 126, 128, 184],
      lines: [
        '42,203 86,190 130,205 175,211 215,207 235,194 270,184 295,190 345,192 370,178 400,164 460,164 500,165 540,178 560,180 600,195 650,203 700,207 760,204 790,209 840,206 880,207 960,206 1010,211 1070,214 1110,206 1170,204 1230,204 1270,200 1310,203 1330,195 1345,180 1366,145 1380,122 1400,112 1415,115 1425,122 1432,135',
        '42,208 86,200 130,200 190,206 240,207 300,194 340,190 380,185 420,173 470,165 520,168 560,177 610,188 660,197 720,204 800,208 900,206 1000,208 1070,213 1130,208 1200,205 1300,206 1330,197 1366,174 1390,155 1410,140 1432,132',
      ],
    },
    {
      height: 122,
      edge: true,
      labels: macdLabels('134.4384', '109.0488', '50.7792'),
      frame: { x: 36.5, y: 268.6, kx: 1.823, ky: 2.984 },
      zero: 517,
      bars: [490, 490, 489, 490, 498, 502, 504, 504, 507, 514, 517, 525, 525, 534, 537, 556, 606, 627, 627, 614, 600, 583, 563, 544, 537, 525, 510, 495, 490, 478, 468, 467, 473, 485, 490, 516, 516, 516, 510, 491, 491, 510, 514, 519, 525, 542, 567, 580, 597, 606, 606, 603, 588, 567, 549, 537, 528, 521, 519, 510, 504, 490, 480, 474, 476, 483, 480, 480, 480, 478, 478, 484, 483, 486, 496, 507, 508, 504, 507, 500, 495, 494, 490, 489, 491, 493, 502, 508, 510, 512, 514, 515, 525, 532, 534, 534, 531, 527, 513, 509, 504, 502, 500, 498, 500, 496, 498, 510, 514, 519, 516, 514, 514, 509, 513, 513, 510, 504, 489, 455, 420, 408, 391, 378, 393, 400, 416, 446],
      lines: [
        '42,469 75,461 130,458 150,463 175,470 195,483 207,510 215,535 235,566 265,580 285,578 300,569 320,563 335,548 350,538 365,520 390,505 410,505 425,519 450,519 475,500 500,506 520,516 540,536 560,565 580,593 590,600 600,615 612,619 640,607 680,598 705,584 730,560 755,553 800,535 840,518 885,520 910,508 960,491 1020,494 1045,510 1090,514 1130,495 1180,482 1210,489 1260,487 1320,476 1345,448 1366,395 1388,345 1410,326 1421,320 1432,326',
        '42,485 75,473 145,463 190,468 215,480 240,514 280,550 315,559 350,552 415,520 450,520 510,509 540,520 580,555 620,589 680,597 710,594 740,575 820,541 900,524 950,506 1020,497 1060,506 1110,508 1190,490 1250,489 1330,479 1345,470 1366,446 1388,412 1410,380 1432,361',
      ],
    },
  ],
}

const day10: ChartData = {
  period: '10天',
  axisHeight: 16,
  axis: [[2, '201801'], [75, '07'], [135, '201901'], [206, '06'], [279, '12'], [333, '202005']],
  panes: [
    {
      height: 291,
      labels: maLabels(['3041.90', '2936.45', '2944.72', '2919.31', '304']),
      frame: { x: 3, y: -15, kx: 3, ky: 3 },
      grid: [46, 178, 310, 442, 574, 706],
      candles:
        'd 230 232 260 276,u 166 170 259 268,u 82 83 169 182,d 54 76 200 204,d 162 168 251 402,u 223 237 268 293,d 234 247 335 384,u 298 328 358 380,d 312 316 395 418,u 326 330 388 410,d 297 324 356 368,d 350 358 410 419,d 388 408 548 573,d 537 547 557 648,u 500 506 589 607,d 499 502 590 648,d 570 594 620 675,u 580 608 619 648,d 610 613 641 682,u 556 626 643 648,d 658 678 707 806,u 654 680 745 762,d 640 667 675 714,d 665 670 674 738,d 675 687 740 744,d 734 744 765 812,u 706 711 754 766,u 690 695 709 734,u 570 572 697 700,u 357 463 550 551,u 360 374 463 468,u 252 280 404 454,d 258 282 303 346,d 288 303 543 545,d 470 522 543 552,d 485 543 557 561,u 435 443 553 560,u 412 436 440 480,d 440 445 493 518,d 465 492 531 543,d 532 538 561 621,u 487 517 550 558,u 414 425 517 522,d 424 425 508 510,u 422 484 507 514,u 454 460 487 500,d 435 456 504 520,d 488 500 527 537,u 454 455 529 540,u 410 416 455 467,u 358 374 418 430,d 372 375 563 655,u 450 460 556 573,u 402 436 448 524,d 392 418 623 632,u 570 619 628 678,u 552 562 628 629,u 530 535 549 602,u 506 508 554 562,u 488 496 512 576,u 472 490 513 530,u 382 383 492 508,u 138 199 373 374',
      lines: [
        '13,212 31,209 49,192 85,187 103,187 121,225 139,270 157,308 175,322 211,360 229,407 247,443 265,480 283,521 301,563 319,578 355,615 373,640 391,652 427,668 445,693 463,707 499,715 517,700 535,640 553,540 571,455 589,398 607,392 625,408 643,440 661,472 679,502 697,494 733,493 751,508 787,508 805,500 823,480 841,478 859,500 877,487 895,470 913,457 931,460 949,462 967,454 985,485 1003,537 1021,539 1039,555 1057,568 1075,545 1093,523 1111,490 1129,413',
        '13,213 49,190 85,190 103,197 121,214 157,250 193,268 211,290 229,335 247,373 265,397 283,436 301,467 355,547 391,606 427,634 463,675 499,690 517,686 535,662 553,632 571,598 589,558 607,544 625,523 643,500 661,472 679,450 697,443 715,449 733,475 751,495 769,505 805,502 841,494 859,500 877,496 895,483 913,465 949,478 967,463 985,477 1003,497 1021,502 1057,507 1093,527 1111,512 1129,484',
        '13,272 31,262 67,248 121,232 175,234 211,247 229,263 247,283 265,296 283,318 319,358 355,402 391,448 427,503 463,555 499,590 535,607 571,603 589,590 643,590 679,572 697,561 733,552 787,525 823,495 859,473 895,466 913,467 931,483 949,490 967,484 1003,490 1039,501 1075,501 1111,490 1129,478',
        '13,322 67,326 121,326 175,338 229,351 319,353 391,361 463,377 499,391 535,395 589,392 643,400 697,406 733,415 805,427 859,434 913,437 949,443 985,458 1003,466 1057,481 1129,492',
        '13,520 121,482 175,467 211,456 283,442 391,424 499,406 553,391 589,376 643,364 697,350 751,340 805,331 877,334 931,336 967,345 1003,364 1057,394 1093,406 1129,412',
      ],
      markers: [
        { text: '3587.03', x: 70, y: 55, dir: 'left' },
        { text: '2440.91', x: 463, y: 811, dir: 'right' },
      ],
    },
    {
      height: 72,
      labels: volLabels('4935597630.0000', '2800713142.4000', 'MAVC'),
      frame: { x: 3, y: 861, kx: 3, ky: 3 },
      grid: [943],
      base: 1067,
      volumes: [1030, 1010, 1000, 996, 1010, 1018, 1010, 1018, 1023, 1027, 1026, 1029, 1029, 1029, 1026, 1024, 1030, 1036, 1038, 1032, 1020, 1015, 1003, 1020, 1032, 1030, 1018, 1024, 994, 913, 943, 940, 961, 982, 996, 1008, 1000, 1006, 1020, 1020, 1020, 1012, 997, 1014, 1024, 1020, 1023, 1023, 1018, 1000, 988, 990, 976, 946, 954, 992, 1000, 997, 1003, 1003, 996, 988, 913],
      lines: [
        '13,1019 67,1010 103,1006 157,1018 229,1026 283,1025 337,1030 373,1028 427,1018 499,1024 517,1016 535,996 571,964 589,948 607,946 625,960 643,978 697,1000 733,1015 805,1016 877,1023 931,1005 949,997 985,973 1039,974 1057,990 1093,1000 1111,998 1129,978',
        '13,1012 121,1012 229,1018 301,1028 373,1030 427,1024 499,1024 535,1008 571,996 607,982 661,975 697,975 733,995 787,1009 859,1018 895,1015 949,1008 985,992 1021,986 1093,986 1129,980',
      ],
    },
    {
      height: 122,
      edge: true,
      labels: macdLabels('41.7788', '4.1277', '75.3021'),
      frame: { x: 3, y: 1080, kx: 3, ky: 3 },
      zero: 1288,
      bars: [1288, 1284, 1266, 1278, 1289, 1301, 1323, 1335, 1353, 1349, 1349, 1356, 1380, 1391, 1386, 1388, 1391, 1382, 1380, 1368, 1367, 1355, 1344, 1331, 1328, 1328, 1313, 1298, 1266, 1224, 1184, 1146, 1134, 1174, 1203, 1228, 1224, 1227, 1240, 1257, 1275, 1277, 1266, 1272, 1275, 1273, 1271, 1278, 1283, 1270, 1256, 1270, 1282, 1272, 1308, 1326, 1326, 1316, 1308, 1297, 1296, 1270, 1221],
      lines: [
        '13,1240 31,1237 49,1225 85,1234 103,1243 121,1260 157,1289 193,1304 211,1316 229,1340 247,1358 265,1367 301,1393 337,1413 355,1418 391,1432 427,1430 463,1438 481,1436 499,1425 517,1407 535,1380 553,1347 571,1308 589,1283 643,1297 679,1278 697,1278 733,1291 787,1283 823,1279 859,1285 895,1273 913,1262 931,1275 967,1270 985,1290 1003,1304 1039,1305 1093,1297 1111,1283 1129,1255',
        '13,1240 67,1235 103,1239 157,1255 229,1290 283,1330 337,1367 391,1397 463,1420 517,1423 535,1413 571,1380 607,1348 643,1327 697,1305 769,1295 859,1286 913,1280 967,1277 1003,1283 1057,1295 1111,1297 1129,1288',
      ],
    },
  ],
}

// Intraday panel
const tickFrame: Frame = { x: 205, y: 71, kx: 3, ky: 2.84 }
const tickVolFrame: Frame = { x: 205, y: 1040, kx: 3, ky: 2.84 }
const tickLine =
  '208,530 209,500 212,473 216,510 219,490 223,520 227,550 232,597 237,568 241,600 248,643 254,628 262,668 272,690 276,725 280,757 284,700 289,650 292,620 296,640 303,618 312,605 319,567 325,615 333,598 338,633 341,613 348,612 354,640 361,698 368,685 378,713 388,735 394,753 400,685 406,673 413,663 424,670 430,710 433,740 437,730 443,745 450,800 457,838 461,815 468,825 475,877 485,880 490,893 496,830 502,800 508,785 515,810 522,813 532,783 540,848 550,862 560,912 566,900 571,868 577,882 590,890 595,910 600,960 608,995 616,1033 622,990 628,942 635,940 640,908 648,900 653,903'
const tickVolumes =
  '208,1320 211,1095 214,1283 217,1207 220,1273 226,1285 235,1297 240,1320 247,1295 252,1325 258,1335 263,1345 270,1332 280,1325 286,1300 290,1340 296,1360 302,1378 310,1385 318,1378 322,1355 328,1386 338,1372 345,1386 352,1383 358,1352 363,1355 370,1378 376,1383 382,1375 388,1370 398,1372 405,1398 412,1398 418,1410 425,1410 430,1385 440,1398 448,1378 453,1360 460,1340 466,1383 473,1388 478,1345 484,1385 493,1375 500,1400 510,1412 518,1417 525,1422 535,1410 543,1412 548,1415 555,1397 562,1398 567,1398 573,1412 580,1420 590,1415 596,1405 601,1373 608,1378 616,1365 620,1375 626,1388 632,1412 640,1415 648,1428 655,1430'
const tickPrices: [number, string, string, string][] = [
  [121, '3483.50', '+2.02%', UP],
  [235, '3466.28', '+1.51%', UP],
  [349, '3449.06', '+1.01%', UP],
  [464, '3431.84', '+0.50%', UP],
  [577, '3414.62', '+0.00%', '#e6e6e6'],
  [691, '3397.40', '-0.50%', '#00d800'],
  [808, '3380.18', '-1.01%', '#00d800'],
  [921, '3362.96', '-1.51%', '#00d800'],
]
const tickVolScale: [number, string, string, string][] = [
  [1090, '11209292', '+100%', '#ffff00'],
  [1180, '8406968', '+75%', '#ffff00'],
  [1271, '5604646', '+50%', '#ffff00'],
  [1362, '2802323', '+25%', '#ffff00'],
]
const tickHours: [number, string, boolean][] = [
  [319, '10:00', true],
  [430, '10:30', false],
  [541, '11:00', true],
  [655, '11:30', false],
  [767, '13:30', true],
  [877, '14:00', false],
  [988, '14:30', true],
]

function TickGrid({ frame, rows }: { frame: Frame; rows: [number, string, string, string][] }) {
  return (
    <g shapeRendering="crispEdges" stroke="#8c0404">
      {rows.map(([v, text]) => (
        <line
          key={v}
          x1="0"
          x2="100%"
          y1={toY(frame, v) + 0.5}
          y2={toY(frame, v) + 0.5}
          strokeWidth={text === '3414.62' ? 2 : 1}
        />
      ))}
      {tickHours.map(([x, , dotted]) => (
        <line
          key={x}
          x1={Math.floor((x - 205) / 3) + 0.5}
          x2={Math.floor((x - 205) / 3) + 0.5}
          y1={frame === tickFrame ? 18 : 0}
          y2="100%"
          strokeDasharray={dotted ? '1 1' : undefined}
        />
      ))}
    </g>
  )
}

function Scale({ frame, rows, side, height }: { frame: Frame; rows: [number, string, string, string][]; side: 'left' | 'right'; height: number }) {
  return (
    <svg className={`shrink-0 text-xs font-bold ${side === 'left' ? 'w-[61px]' : 'w-[51px]'}`} style={{ height }}>
      {rows.map(([v, left, right, color]) => (
        <text
          key={v}
          x={side === 'left' ? 59 : 3}
          y={toY(frame, v) + 6}
          textAnchor={side === 'left' ? 'end' : 'start'}
          fill={color}
        >
          {side === 'left' ? left : right}
        </text>
      ))}
    </svg>
  )
}

function TickPanel() {
  const keys = tickVolumes.split(' ').map((p) => p.split(',').map(Number))
  const columns = Array.from({ length: 150 }, (_, px) => {
    const x = 205 + 3 * px
    let top = 1452
    keys.forEach(([kx, ky]) => {
      if (kx <= x + 2) top = ky
    })
    return { px, top }
  }).filter(({ px }) => px > 0 && (px < 8 || px % 5 !== 1))

  return (
    <article className={`min-w-0 overflow-hidden ${frameClass()}`}>
      <PanelHeader size="tick" />
      <div className="flex border-t border-[#c01414]">
        <Scale frame={tickFrame} rows={tickPrices} side="left" height={339} />
        <div className="grid min-w-0 flex-1 overflow-hidden border-x border-[#c01414]">
          <svg className="col-start-1 row-start-1 w-full" style={{ height: 339 }}>
            <TickGrid frame={tickFrame} rows={tickPrices} />
            <polyline points={toPoints(tickFrame, tickLine)} fill="none" stroke="#fff" />
          </svg>
          <p className="col-start-1 row-start-1 flex h-[18px] gap-3 pl-0.5 text-xs leading-[18px] text-white">
            <span>分时走势</span>
            <span className="text-[#ffff00]">均线</span>
          </p>
        </div>
        <Scale frame={tickFrame} rows={tickPrices} side="right" height={339} />
      </div>
      <div className="flex border-t-2 border-[#d01414]">
        <div className="-mr-px flex border-x border-[#d01414]">
          <div className="-mx-px flex">
            <Scale frame={tickVolFrame} rows={tickVolScale} side="left" height={146} />
          </div>
        </div>
        <div className="grid min-w-0 flex-1 overflow-hidden border-x border-[#c01414]">
          <svg className="col-start-1 row-start-1 w-full" style={{ height: 146 }}>
            <TickGrid frame={tickVolFrame} rows={tickVolScale} />
            <g fill="#ffff00" shapeRendering="crispEdges">
              {columns.map(({ px, top }) => (
                <rect key={px} x={px} y={toY(tickVolFrame, top)} width={1} height={145 - toY(tickVolFrame, top)} />
              ))}
            </g>
          </svg>
          <p className="col-start-1 row-start-1 h-[18px] pl-0.5 text-xs leading-[18px] text-[#ffff00]">成交量</p>
        </div>
        <Scale frame={tickVolFrame} rows={tickVolScale} side="right" height={146} />
      </div>
      <svg className="block w-full border-t border-[#c01414] text-[11px]" style={{ height: 16 }}>
        <text x="61" y="11" textAnchor="middle" fill="#e0e0e0">
          09:30
        </text>
        {tickHours.map(([x, text]) => (
          <text key={text} x={(x - 21) / 3} y="11" textAnchor="middle" fill="#e0e0e0">
            {text}
          </text>
        ))}
      </svg>
    </article>
  )
}

const menus = ['系统', '页面', '分析', '新闻', '特色功能', '徽商专栏', '交易', '工具', '帮助']

function TitleBar() {
  return (
    <header className="flex h-[25px] items-center bg-linear-to-b from-[#e6e6e6] via-[#f2f2f2] via-30% to-[#c8c8c8] text-xs text-black">
      <nav className="flex pt-0.5">
        {menus.map((m) => (
          <button key={m} className={`px-3 ${m === '特色功能' ? 'text-[#ff0000]' : ''}`}>
            {m}
          </button>
        ))}
      </nav>
      <h1 className="flex-1 pr-1.5 text-center text-[15px] text-[#ff6428]">博易云-徽商期货</h1>
      <div className="flex gap-[3px] text-[15px] font-medium text-[#d80000]">
        <button className="flex h-5 w-[74px] items-center justify-center gap-2 rounded border border-[#8c8c8c] bg-linear-to-b from-[#f4f4f4] to-[#bebebe]">
          <svg width="12" height="14" viewBox="0 0 12 14">
            <path d="M8 0L1 8h4l-2 6 8-9H7l3-5z" fill="#f59a1a" />
          </svg>
          交易
        </button>
        <button className="flex h-5 w-[74px] items-center justify-center gap-1.5 rounded border border-[#8c8c8c] bg-linear-to-b from-[#f4f4f4] to-[#bebebe]">
          <svg width="18" height="14" viewBox="0 0 18 14">
            <ellipse cx="9" cy="6.500" rx="8.500" ry="5.500" fill="#8a8a8a" />
            <path d="M10 11l5 3-1-5z" fill="#8a8a8a" />
            <g fill="#fff">
              <circle cx="5.500" cy="6.500" r="1" />
              <circle cx="9" cy="6.500" r="1" />
              <circle cx="12.500" cy="6.500" r="1" />
            </g>
          </svg>
          论坛
        </button>
      </div>
      <div className="ml-3 flex h-full items-start text-[#a8a8a8]">
        <button aria-label="最小化" className="h-[18px] w-6 border-l border-white">
          <svg width="22" height="16" viewBox="0 0 22 16">
            <rect x="4.500" y="8.500" width="12" height="3" fill="#fff" stroke="currentColor" />
          </svg>
        </button>
        <button aria-label="还原" className="h-[18px] w-[25px] border-l border-white">
          <svg width="22" height="16" viewBox="0 0 22 16">
            <path d="M5.500 2.500h11v9h-11zM8.500 5.500h5v3h-5z" fill="#fff" fillRule="evenodd" stroke="currentColor" />
          </svg>
        </button>
        <button aria-label="关闭" className="h-[18px] w-[38px] border-x border-white">
          <svg width="34" height="16" viewBox="0 0 34 16">
            <path d="M12 2.500h4l1.500 2.500 1.500-2.500h4l-3.500 4.500 3.500 4.500h-4l-1.500-2.500-1.500 2.500h-4l3.500-4.500z" fill="#fff" stroke="currentColor" />
          </svg>
        </button>
      </div>
    </header>
  )
}

const toolIcons: [string, ReactNode][] = [
  ['后退', <path key="p" d="M1 8l7-6v3.500h7v5H8V14z" fill="#fcc830" stroke="#c88a10" />],
  [
    '首页',
    <g key="g">
      <path d="M3 8v7h10V8L8 3z" fill="#f2f2f2" stroke="#999" strokeWidth=".6" />
      <path d="M0 8l8-7.500L16 8l-2 1.500L8 4 2 9.500z" fill="#c81e28" />
      <rect x="7" y="9" width="3" height="6" fill="#604030" />
      <rect x="12" y="1" width="2" height="4" fill="#b02020" />
    </g>,
  ],
  [
    '资讯',
    <g key="g">
      <path d="M2 1h12v11l-3 4H2z" fill="#e8a838" />
      <path d="M1 3h13v2H1zM14 12l-3 4v-4z" fill="#c07810" />
      <path d="M4 7h8M4 9.500h8" stroke="#fbe0a0" />
    </g>,
  ],
  [
    'F10',
    <g key="g">
      <rect x="0" y="2" width="16" height="13" rx="1.500" fill="#f09030" />
      <path d="M0 4l16-3v3z" fill="#fcc070" />
      <text x="8" y="12" textAnchor="middle" fill="#fff" className="text-[8px] font-bold">
        F10
      </text>
    </g>,
  ],
  [
    '刷新',
    <g key="g" fill="none" stroke="#4ea82a" strokeWidth="2.500">
      <path d="M2 6.500c2-4 8-4 11-1M14 10c-2 4-8 4-11 1" />
      <path d="M14 2v5H9zM2 14V9h5z" fill="#4ea82a" stroke="none" />
    </g>,
  ],
  [
    '放大',
    <g key="g">
      <path d="M1 15l6-6" stroke="#f5b030" strokeWidth="3.500" />
      <circle cx="10.500" cy="5.500" r="4.500" fill="#fff0f0" stroke="#e84040" strokeWidth="2" />
      <path d="M8 5.500h5M10.500 3v5" stroke="#e02828" strokeWidth="1.500" />
    </g>,
  ],
  [
    '缩小',
    <g key="g">
      <path d="M1 15l6-6" stroke="#f5b030" strokeWidth="3.500" />
      <circle cx="10.500" cy="5.500" r="4.500" fill="#fff0f0" stroke="#e84040" strokeWidth="2" />
      <path d="M8 5.500h5" stroke="#e02828" strokeWidth="1.500" />
    </g>,
  ],
  [
    '叠加',
    <g key="g">
      <rect x="1" y="1" width="10" height="9" rx="1" fill="#e04848" stroke="#a83030" />
      <rect x="6" y="5" width="10" height="10" rx="1" fill="#70b070" stroke="#4c904c" />
    </g>,
  ],
  [
    '画线',
    <g key="g">
      <path d="M2 13l2-5 7-7 4 3-7 8z" fill="#e84820" />
      <path d="M2 13l2-5 3.500 3.500z" fill="#f8d8a8" />
      <path d="M1 15h14" stroke="#e04020" />
    </g>,
  ],
  [
    '预警',
    <g key="g">
      <path d="M5 1c7 1 7 5 10 9l-7 4-7-1C5 9 3 5 5 1z" fill="#d8902c" stroke="#a05c10" />
      <circle cx="9" cy="13.500" r="2" fill="#7c3c10" />
      <path d="M6 3c4 2 3 5 4 8" stroke="#fce0a0" fill="none" strokeWidth="1.500" />
    </g>,
  ],
  [
    '筛选',
    <g key="g">
      <path d="M1 2h14l-5.500 6v7h-3V8z" fill="#a8a8a8" stroke="#707070" />
      <path d="M4 3.500h8L9 7H7z" fill="#e03838" />
    </g>,
  ],
]

const squareButtons: [string, string][] = [
  ['日', 'gold'],
  ['周', 'gold'],
  ['月', 'gold'],
  ['季', 'gold'],
  ['X', 'gold'],
  ['1', 'green'],
  ['3', 'green'],
  ['5', 'green'],
  ['15', 'green'],
  ['30', 'green'],
  ['60', 'green'],
  ['2hr', 'green'],
  ['4hr', 'green'],
  ['Y', 'green'],
]

const squareTone: Record<string, string> = {
  gold: 'from-[#e4b428] to-[#b88410] text-[#fff6d0]',
  green: 'from-[#90c884] to-[#56984e] text-white',
  orange: 'from-[#ff7a48] to-[#e0401c] text-white',
}

function SquareButton({ text, tone, active = false }: { text: string; tone: string; active?: boolean }) {
  return (
    <button
      className={`flex h-[21px] w-7 items-center justify-center ${active ? 'rounded border border-[#505050] bg-white' : ''}`}
    >
      <span
        className={`flex h-4 w-4 items-center justify-center rounded-xs bg-linear-to-b leading-4 ${text.length > 2 ? 'text-[9px]' : 'text-xs'} ${squareTone[tone]}`}
      >
        {text}
      </span>
    </button>
  )
}

function Separator() {
  return (
    <div className="flex w-2 justify-center">
      <div className="h-[18px] w-px bg-[#909090]" />
    </div>
  )
}

function ToolBar() {
  return (
    <div className="flex h-[22px] items-center bg-[#ebebeb]">
      {toolIcons.map(([label, icon]) => (
        <button key={label} aria-label={label} className="flex w-7 justify-center">
          <svg width="16" height="16" viewBox="0 0 16 16">
            {icon}
          </svg>
        </button>
      ))}
      <button aria-label="新" className="flex w-7 justify-center">
        <svg width="18" height="18" viewBox="0 0 18 18">
          <text x="1" y="14" fill="#4a96e8" className="text-xs">
            新
          </text>
          <circle cx="14" cy="4" r="3" fill="#ff1010" />
        </svg>
      </button>
      <Separator />
      <button aria-label="报价表" className="flex w-7 justify-center">
        <svg width="16" height="16" viewBox="0 0 16 16" shapeRendering="crispEdges">
          <rect x=".5" y=".5" width="15" height="15" fill="#fff" stroke="#404040" />
          <rect x="1" y="1" width="14" height="3" fill="#e8c040" />
          <path d="M3 6.500h4M9 6.500h4" stroke="#202020" />
          <path d="M3 9.500h4M9 9.500h4" stroke="#209020" />
          <path d="M3 12.500h4M9 12.500h4" stroke="#c02020" />
        </svg>
      </button>
      <button aria-label="走势图" className="flex w-7 justify-center">
        <svg width="16" height="16" viewBox="0 0 16 16">
          <path d="M2 16v-5h3v5zM7 16v-3h3v3zM12 16V9h3v7z" fill="#f0a030" />
          <path d="M1 9l4-4 4 4 6-7" fill="none" stroke="#e01818" strokeWidth="2" />
          <path d="M11 1h5v5z" fill="#e01818" />
        </svg>
      </button>
      <SquareButton text="Tick" tone="orange" />
      {squareButtons.map(([text, tone]) => (
        <SquareButton key={text} text={text} tone={tone} active={text === '60'} />
      ))}
      <Separator />
      <SquareButton text="画" tone="orange" />
    </div>
  )
}

const tabs = ['截图', '国内期货', '股指期货', '期权报价', '期权策略', '热点排名', '新闻资讯']

function SideTabs() {
  return (
    <nav className="flex w-[18px] shrink-0 flex-col bg-linear-to-b from-[#dedede] to-[#c4c4c4]">
      {tabs.map((tab, i) => (
        <button key={tab} className="grid h-[82px] w-[18px]">
          <svg width="18" height="82" className="col-start-1 row-start-1">
            <path
              d="M18.500 0.500H4l-1.500 2V71.500L18.500 81.500"
              fill={i === 0 ? '#787878' : '#f1f1ea'}
              stroke={i === 0 ? '#505050' : '#686868'}
            />
            {i === 0 && <path d="M9 60v8l4-4z" fill="#fff" />}
          </svg>
          <span
            className={`col-start-1 row-start-1 mr-px w-3 justify-self-end text-xs leading-3 ${i === 0 ? 'pt-2 text-white' : 'pt-3.5 text-[#555]'}`}
          >
            {tab}
          </span>
        </button>
      ))}
    </nav>
  )
}

function Quote({ name, nameWidth, price, change, turnover }: { name: string; nameWidth: string; price: string; change: string; turnover: string }) {
  return (
    <div className="flex items-center border-r border-[#8a8a8a] px-2 leading-4">
      <span className={nameWidth}>{name}</span>
      <span className="text-[#007c00]">{price}</span>
      <span className="w-16 text-right text-[#007c00]">{change}</span>
      <span className="pl-1.5">{turnover}</span>
    </div>
  )
}

function StatusBar() {
  return (
    <footer>
      <div className="flex h-5 items-center bg-linear-to-b from-[#bcbcbc] to-[#a4a4a4] font-['Liberation_Mono','Noto_Sans_CJK_SC',monospace] text-xs font-bold text-[#404040]">
        <Quote name="沪" nameWidth="w-7" price="3367.21" change="-47.41" turnover="4221.49亿" />
        <Quote name="深" nameWidth="w-5" price="13771.96" change="-224.50" turnover="5834.17亿" />
        <Quote name="300" nameWidth="w-7" price="4756.83" change="-49.86" turnover="3038.65亿" />
        <span className="mr-[92px] ml-auto font-['Noto_Sans']">Po</span>
      </div>
      <div className="h-0.5 bg-linear-to-r from-[#3c6c90] via-[#a8c4dc] to-[#4c6c88]" />
    </footer>
  )
}

export default function App() {
  return (
    <div className="relative min-h-screen overflow-hidden bg-[#c4c4c4] font-['Liberation_Sans','Noto_Sans_CJK_SC',sans-serif]">
      <TitleBar />
      <ToolBar />
      <main className="flex">
        <SideTabs />
        <div className="grid min-w-0 flex-1 grid-cols-4">
          <ChartPanel chart={min60} />
          <ChartPanel chart={min120} />
          <ChartPanel chart={day3} />
          <ChartPanel chart={week} />
          <ChartPanel chart={daily} />
          <ChartPanel chart={day10} />
          <TickPanel />
        </div>
      </main>
      <StatusBar />
      <div
        role="tooltip"
        className="absolute right-0 bottom-1 z-20 w-[97px] rounded-xs border border-[#767676] bg-linear-to-b from-white to-[#e4e5f0] py-0.5 pl-1.5 text-xs leading-4 text-[#575757]"
      >
        2020年7月15日
        <br />
        星期三
      </div>
      {/* start orb peeking over the task bar */}
      <svg width="28" height="6" className="absolute bottom-0 left-3">
        <ellipse cx="14" cy="12" rx="13" ry="11" fill="#7fa8c8" stroke="#2c5878" strokeWidth="1.500" />
      </svg>
    </div>
  )
}
